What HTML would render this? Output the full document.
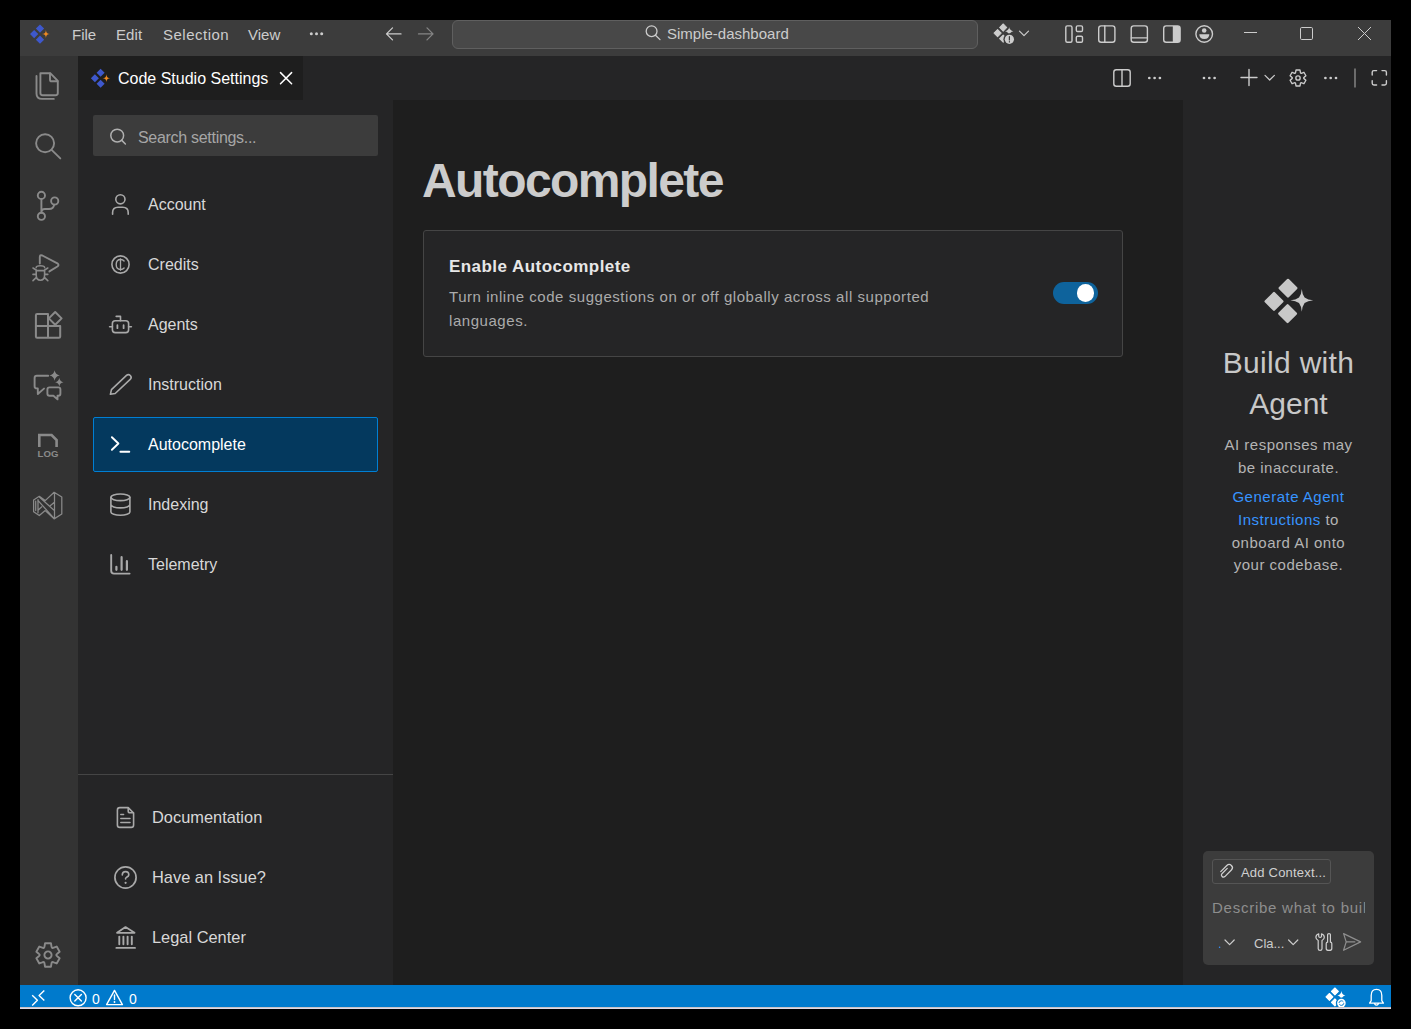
<!DOCTYPE html>
<html><head><meta charset="utf-8">
<style>
*{margin:0;padding:0;box-sizing:border-box}
html,body{width:1411px;height:1029px;background:#000;overflow:hidden;font-family:"Liberation Sans",sans-serif}
.r{position:absolute}
.t{position:absolute;white-space:nowrap}
svg.ov{position:absolute;left:0;top:0;width:1411px;height:1029px}
</style></head><body>
<div class="r" style="left:20px;top:20px;width:1371px;height:36px;background:#3c3c3c;"></div>
<div class="r" style="left:20px;top:56px;width:58px;height:929px;background:#333333;"></div>
<div class="r" style="left:78px;top:56px;width:1105px;height:44px;background:#252526;"></div>
<div class="r" style="left:78px;top:56px;width:225px;height:44px;background:#1e1e1e;"></div>
<div class="r" style="left:78px;top:100px;width:315px;height:885px;background:#252526;"></div>
<div class="r" style="left:393px;top:100px;width:790px;height:885px;background:#1e1e1e;"></div>
<div class="r" style="left:1183px;top:56px;width:208px;height:929px;background:#252526;"></div>
<div class="r" style="left:20px;top:985px;width:1371px;height:22px;background:#007acc;"></div>
<div class="r" style="left:20px;top:1007px;width:1371px;height:2px;background:#e2dee6;"></div>
<div class="r" style="left:452px;top:20px;width:526px;height:29px;background:#484848;border:1px solid #5f5f5f;border-radius:6px;"></div>
<div class="r" style="left:93px;top:115px;width:285px;height:41px;background:#3c3c3c;border-radius:2px;"></div>
<div class="r" style="left:93px;top:417px;width:285px;height:55px;background:#04395e;border:1px solid #007fd4;border-radius:2px;"></div>
<div class="r" style="left:78px;top:774px;width:315px;height:1px;background:#454545;"></div>
<div class="r" style="left:423px;top:230px;width:700px;height:127px;background:#252526;border:1px solid #454545;border-radius:3px;"></div>
<div class="r" style="left:1053px;top:282px;width:45px;height:22px;background:#0e639c;border-radius:11px;"></div>
<div class="r" style="left:1076.6px;top:284.2px;width:17.4px;height:17.4px;background:#ffffff;border-radius:50%;"></div>
<div class="r" style="left:1203px;top:851px;width:171px;height:114px;background:#3c3c3c;border-radius:5px;"></div>
<div class="r" style="left:1212px;top:859px;width:119px;height:25px;background:transparent;border:1px solid #555555;border-radius:3px;"></div>
<div class="t" style="left:72px;top:27.10px;font-size:15px;line-height:15px;color:#cccccc;font-weight:normal;letter-spacing:0px;">File</div>
<div class="t" style="left:116px;top:27.10px;font-size:15px;line-height:15px;color:#cccccc;font-weight:normal;letter-spacing:0.1px;">Edit</div>
<div class="t" style="left:163px;top:27.10px;font-size:15px;line-height:15px;color:#cccccc;font-weight:normal;letter-spacing:0.5px;">Selection</div>
<div class="t" style="left:248px;top:27.10px;font-size:15px;line-height:15px;color:#cccccc;font-weight:normal;letter-spacing:0px;">View</div>
<div class="t" style="left:667px;top:25.90px;font-size:15px;line-height:15px;color:#cccccc;font-weight:normal;">Simple-dashboard</div>
<div class="t" style="left:118px;top:70.56px;font-size:16px;line-height:16px;color:#ffffff;font-weight:normal;">Code Studio Settings</div>
<div class="t" style="left:138px;top:129.66px;font-size:16px;line-height:16px;color:#a6a6a6;font-weight:normal;letter-spacing:-0.3px;">Search settings...</div>
<div class="t" style="left:148px;top:196.96px;font-size:16px;line-height:16px;color:#d8d8d8;font-weight:normal;">Account</div>
<div class="t" style="left:148px;top:256.96px;font-size:16px;line-height:16px;color:#d8d8d8;font-weight:normal;">Credits</div>
<div class="t" style="left:148px;top:316.96px;font-size:16px;line-height:16px;color:#d8d8d8;font-weight:normal;">Agents</div>
<div class="t" style="left:148px;top:376.96px;font-size:16px;line-height:16px;color:#d8d8d8;font-weight:normal;">Instruction</div>
<div class="t" style="left:148px;top:436.96px;font-size:16px;line-height:16px;color:#ffffff;font-weight:normal;">Autocomplete</div>
<div class="t" style="left:148px;top:496.96px;font-size:16px;line-height:16px;color:#d8d8d8;font-weight:normal;">Indexing</div>
<div class="t" style="left:148px;top:556.96px;font-size:16px;line-height:16px;color:#d8d8d8;font-weight:normal;">Telemetry</div>
<div class="t" style="left:152px;top:808.92px;font-size:16.4px;line-height:16.4px;color:#d8d8d8;font-weight:normal;">Documentation</div>
<div class="t" style="left:152px;top:868.92px;font-size:16.4px;line-height:16.4px;color:#d8d8d8;font-weight:normal;">Have an Issue?</div>
<div class="t" style="left:152px;top:928.92px;font-size:16.4px;line-height:16.4px;color:#d8d8d8;font-weight:normal;">Legal Center</div>
<div class="t" style="left:422px;top:157.37px;font-size:48px;line-height:48px;color:#cccccc;font-weight:bold;letter-spacing:-1.6px;">Autocomplete</div>
<div class="t" style="left:449px;top:258.31px;font-size:17px;line-height:17px;color:#e7e7e7;font-weight:bold;letter-spacing:0.45px;">Enable Autocomplete</div>
<div class="t" style="left:449px;top:289.10px;font-size:15px;line-height:15px;color:#ababab;font-weight:normal;letter-spacing:0.55px;">Turn inline code suggestions on or off globally across all supported</div>
<div class="t" style="left:449px;top:313.10px;font-size:15px;line-height:15px;color:#ababab;font-weight:normal;letter-spacing:0.55px;">languages.</div>
<div class="t" style="left:1288.5px;top:348.31px;font-size:30px;line-height:30px;color:#c8c8c8;font-weight:normal;transform:translateX(-50%);text-align:center;letter-spacing:0.3px;">Build with</div>
<div class="t" style="left:1288.5px;top:388.71px;font-size:30px;line-height:30px;color:#c8c8c8;font-weight:normal;transform:translateX(-50%);text-align:center;letter-spacing:0px;">Agent</div>
<div class="t" style="left:1288.5px;top:437.20px;font-size:15px;line-height:15px;color:#b4b4b4;font-weight:normal;transform:translateX(-50%);text-align:center;letter-spacing:0.5px;">AI responses may</div>
<div class="t" style="left:1288.5px;top:460.00px;font-size:15px;line-height:15px;color:#b4b4b4;font-weight:normal;transform:translateX(-50%);text-align:center;letter-spacing:0.5px;">be inaccurate.</div>
<div class="t" style="left:1288.5px;top:489.30px;font-size:15px;line-height:15px;color:#b4b4b4;font-weight:normal;transform:translateX(-50%);text-align:center;letter-spacing:0.5px;"><span style="color:#3794ff">Generate Agent</span></div>
<div class="t" style="left:1288.5px;top:512.20px;font-size:15px;line-height:15px;color:#b4b4b4;font-weight:normal;transform:translateX(-50%);text-align:center;letter-spacing:0.5px;"><span style="color:#3794ff">Instructions</span> to</div>
<div class="t" style="left:1288.5px;top:534.90px;font-size:15px;line-height:15px;color:#b4b4b4;font-weight:normal;transform:translateX(-50%);text-align:center;letter-spacing:0.5px;">onboard AI onto</div>
<div class="t" style="left:1288.5px;top:556.60px;font-size:15px;line-height:15px;color:#b4b4b4;font-weight:normal;transform:translateX(-50%);text-align:center;letter-spacing:0.5px;">your codebase.</div>
<div class="t" style="left:1241px;top:866.30px;font-size:13px;line-height:13px;color:#d0d0d0;font-weight:normal;letter-spacing:0.2px;">Add Context...</div>
<div class="r" style="left:1212px;top:895px;width:153px;height:24px;overflow:hidden"><div class="t" style="left:0px;top:5.30px;font-size:15px;line-height:15px;color:#8e8e8e;font-weight:normal;letter-spacing:0.75px;">Describe what to build</div></div>
<div class="t" style="left:1254px;top:936.50px;font-size:13px;line-height:13px;color:#cccccc;font-weight:normal;">Cla...</div>
<div class="t" style="left:92px;top:991.55px;font-size:14px;line-height:14px;color:#ffffff;font-weight:normal;">0</div>
<div class="t" style="left:129px;top:991.55px;font-size:14px;line-height:14px;color:#ffffff;font-weight:normal;">0</div>

<svg class="ov" width="1411" height="1029" viewBox="0 0 1411 1029" fill="none" stroke-linecap="round" stroke-linejoin="round">
<defs>
  <linearGradient id="bl" x1="0" y1="0" x2="1" y2="1">
    <stop offset="0" stop-color="#4865dc"/><stop offset="1" stop-color="#3249b0"/>
  </linearGradient>
  <g id="dia">
    <path d="M0,-8.3 L8.3,0 L0,8.3 L-8.3,0Z" stroke-width="2.4" stroke-linejoin="round"/>
  </g>
  <path id="star" d="M0,-11.4 Q0.4,-6 2.8,-2.8 Q6,-0.4 11.4,0 Q6,0.4 2.8,2.8 Q0.4,6 0,11.4 Q-0.4,6 -2.8,2.8 Q-6,0.4 -11.4,0 Q-6,-0.4 -2.8,-2.8 Q-0.4,-6 0,-11.4Z"/>
</defs>

<!-- ===== title bar ===== -->
<!-- logo -->
<path d="M40.00,24.40 L44.12,28.52 L40.00,32.64 L35.88,28.52Z M34.15,29.98 L38.27,34.10 L34.15,38.22 L30.03,34.10Z M40.00,35.56 L44.12,39.68 L40.00,43.80 L35.88,39.68Z" fill="#3e58cc"/><path d="M45.94,30.10 Q46.08,31.99 46.92,33.12 Q48.05,33.96 49.94,34.10 Q48.05,34.24 46.92,35.08 Q46.08,36.21 45.94,38.10 Q45.80,36.21 44.96,35.08 Q43.83,34.24 41.94,34.10 Q43.83,33.96 44.96,33.12 Q45.80,31.99 45.94,30.10Z" fill="#ee8a22"/>
<!-- more dots -->
<g fill="#cccccc"><circle cx="311.3" cy="33.8" r="1.5"/><circle cx="316.5" cy="33.8" r="1.5"/><circle cx="321.7" cy="33.8" r="1.5"/></g>
<!-- back / forward -->
<g stroke="#cccccc" stroke-width="1.3"><path d="M386.5,33.9 H401 M392.5,27.9 L386.5,33.9 L392.5,39.9"/></g>
<g stroke="#858585" stroke-width="1.3"><path d="M418.5,33.9 H433 M427,27.9 L433,33.9 L427,39.9"/></g>
<!-- search icon in command center -->
<g stroke="#cccccc" stroke-width="1.3"><circle cx="651.6" cy="31.2" r="5.4"/><path d="M655.5,35.2 L660,39.6"/></g>
<!-- agent status icon -->
<g transform="translate(1003.2,33.1) scale(0.43)" fill="#cccccc" stroke="#cccccc">
  <use href="#dia" x="0" y="-13"/><use href="#dia" x="-13" y="0"/><use href="#dia" x="0" y="13"/>
</g>
<path d="M1009.2,27.2 Q1009.8,30.4 1013.4,31.2 Q1009.8,32 1009.2,35.2 Q1008.6,32 1005,31.2 Q1008.6,30.4 1009.2,27.2Z" fill="#cccccc"/>
<circle cx="1009.4" cy="39.3" r="6" fill="#3c3c3c"/>
<circle cx="1009.4" cy="39.3" r="4.6" fill="#cccccc"/>
<path d="M1009.4,36.6 V40 M1009.4,41.7 V42" stroke="#3c3c3c" stroke-width="1.2"/>
<path d="M1019.5,31.2 L1024,35.7 L1028.5,31.2" stroke="#cccccc" stroke-width="1.2"/>
<!-- layout icons -->
<g stroke="#cccccc" stroke-width="1.4" fill="none">
  <rect x="1065.8" y="25.9" width="6.2" height="16.4" rx="1.5"/>
  <rect x="1076.3" y="25.9" width="6.2" height="5.6" rx="1.3"/>
  <rect x="1076.3" y="36.3" width="6.2" height="6" rx="1.3"/>
  <rect x="1098.7" y="25.9" width="16.2" height="16.4" rx="2.5"/><path d="M1104.8,26 V42.2"/>
  <rect x="1131.2" y="25.9" width="16.2" height="16.4" rx="2.5"/><path d="M1131.3,37.9 H1147.3"/>
  <rect x="1163.7" y="25.9" width="16.4" height="16.4" rx="2.5"/>
  <circle cx="1204.2" cy="34" r="8.3"/>
</g>
<path d="M1172.8,25.9 H1177.6 A2.5,2.5 0 0 1 1180.1,28.4 V39.8 A2.5,2.5 0 0 1 1177.6,42.3 H1172.8Z" fill="#cccccc"/>
<circle cx="1204.2" cy="30.5" r="2.3" fill="#cccccc"/>
<path d="M1199.3,34.2 H1209.3 Q1209.3,39 1204.3,39 Q1199.3,39 1199.3,34.2Z" fill="#cccccc"/>
<!-- window controls -->
<g stroke="#cccccc" stroke-width="1" fill="none" stroke-linecap="butt">
  <path d="M1244,32.5 H1257"/>
  <rect x="1300.5" y="27.5" width="12" height="12" rx="1.2"/>
  <path d="M1358,27 L1371,40 M1371,27 L1358,40"/>
</g>

<!-- ===== activity bar ===== -->
<g stroke="#8a8a8a" stroke-width="1.9" fill="none">
  <!-- files -->
  <path d="M40.4,73.3 H50.5 L57.8,80.8 V93 Q57.8,95.2 55.6,95.2 H42.6 Q40.4,95.2 40.4,93 Z"/>
  <path d="M50,73.5 V79.7 Q50,81.3 51.6,81.3 H57.5"/>
  <path d="M36.5,76 V93.5 Q36.5,98.9 42,98.9 H53.8"/>
  <!-- search -->
  <circle cx="45.1" cy="143.3" r="9"/>
  <path d="M51.6,149.9 L60.3,158.4"/>
  <!-- source control -->
  <circle cx="41.4" cy="195.4" r="3.6"/>
  <circle cx="54.7" cy="201" r="3.6"/>
  <circle cx="41.4" cy="216.3" r="3.6"/>
  <path d="M41.4,199 V212.7 M54.2,204.6 Q53.5,209 49,209 H44.8 Q41.6,209 41.4,212"/>
  <!-- run & debug -->
  <path d="M39.8,263.6 V257 Q39.8,254.6 42.3,255.5 L57.4,263.3 Q59.6,265 57.4,266.5 L49.4,271.4"/>
  <path d="M36.2,267.6 Q36.2,265.8 40.4,265.8 Q44.6,265.8 44.6,267.6 M36.2,270.6 H44.6 M36.2,270.6 V275 Q36.2,280.2 40.4,280.2 Q44.6,280.2 44.6,275 V270.6 M36.2,270 L33,268 M44.6,270 L47.8,268 M36.2,274.4 H33 M44.6,274.4 H47.8 M36.4,277.4 L33,280.6 M44.4,277.4 L47.8,280.6" stroke-width="1.6"/>
  <!-- extensions -->
  <path d="M35.9,326 V315.3 Q35.9,314.1 37.1,314.1 H48 V337.8 H37.1 Q35.9,337.8 35.9,336.6 Z M35.9,326 H60.2 V336.6 Q60.2,337.8 59,337.8 H48" stroke-width="2"/>
  <path d="M55.2,312 L61.6,318.4 L55.2,324.8 L48.8,318.4 Z" stroke-width="2"/>
  <!-- chat sparkle -->
  <path d="M48.2,375.8 H36.8 Q34.6,375.8 34.6,378 V386.2 Q34.6,388.4 36.8,388.4 H37.8 V394 L44,388.6"/>
  <path d="M49.5,387.4 H58.3 Q60.4,387.4 60.4,389.5 V393.7 Q60.4,395.8 58.3,395.8 H57.5 V399.4 L53.4,395.8 H49.5 Q47.4,395.8 47.4,393.7 V389.5 Q47.4,387.4 49.5,387.4 Z"/>
  <!-- LOG -->
  <path d="M39.3,447 V435 H51.6 L56.6,440 V447" stroke-width="2.6" stroke-linejoin="miter" stroke-linecap="butt"/>
  <!-- VS -->
  <path d="M33.6,500 L39.3,496.3 L45.2,500.6 L54.1,492.3 L61.8,497 V514 L54.1,518.9 L45.2,510.6 L39.3,515.6 L33.6,511.7 Z M54.5,493 V518.4 M39.6,497.3 L54.4,510.6 M37.9,500.4 L53.4,517.6 M54.4,502.3 L50.2,505.8 M41.8,506.8 L38,510.2 M35.7,501.2 V510.6 M38,499.6 V512.8" stroke-width="1.25"/>
  <!-- gear -->
</g>
<g fill="#8a8a8a">
  <path d="M54.6,375.5 m0,-5.2 Q55.3,374.8 59.8,375.5 Q55.3,376.2 54.6,380.7 Q53.9,376.2 49.4,375.5 Q53.9,374.8 54.6,370.3Z"/>
  <path d="M59.3,382.3 m0,-4.2 Q59.9,381.7 63.5,382.3 Q59.9,382.9 59.3,386.5 Q58.7,382.9 55.1,382.3 Q58.7,381.7 59.3,378.1Z"/>
</g>
<text x="48" y="457.2" font-family="Liberation Sans" font-weight="bold" font-size="9.6" fill="#8a8a8a" text-anchor="middle" stroke="none">LOG</text>
<g transform="translate(48,955)" stroke="#8a8a8a" stroke-width="1.9" fill="none">
  <path d="M-3.48,-8.62L-2.93,-11.74 L2.93,-11.74 L3.48,-8.62 Q3.70,-6.41 5.73,-7.33L8.70,-8.41 L11.63,-3.34 L9.21,-1.29 Q7.40,0.00 9.21,1.29L11.63,3.34 L8.70,8.41 L5.73,7.33 Q3.70,6.41 3.48,8.62L2.93,11.74 L-2.93,11.74 L-3.48,8.62 Q-3.70,6.41 -5.73,7.33L-8.70,8.41 L-11.63,3.34 L-9.21,1.29 Q-7.40,0.00 -9.21,-1.29L-11.63,-3.34 L-8.70,-8.41 L-5.73,-7.33 Q-3.70,-6.41 -3.48,-8.62Z"/>
  <circle r="3.6"/>
</g>

<!-- ===== tab ===== -->
<path d="M100.60,68.72 L104.63,72.74 L100.60,76.77 L96.57,72.74Z M94.88,74.17 L98.91,78.20 L94.88,82.23 L90.85,78.20Z M100.60,79.63 L104.63,83.66 L100.60,87.68 L96.57,83.66Z" fill="#3e58cc"/><path d="M106.41,74.30 Q106.54,76.15 107.37,77.24 Q108.46,78.06 110.31,78.20 Q108.46,78.34 107.37,79.16 Q106.54,80.25 106.41,82.10 Q106.27,80.25 105.45,79.16 Q104.36,78.34 102.51,78.20 Q104.36,78.06 105.45,77.24 Q106.27,76.15 106.41,74.30Z" fill="#ee8a22"/>
<path d="M280.5,72.6 L291.6,83.7 M291.6,72.6 L280.5,83.7" stroke="#ffffff" stroke-width="1.5"/>

<!-- ===== settings search icon ===== -->
<g stroke="#b0b0b0" stroke-width="1.5"><circle cx="117.2" cy="135.6" r="6.4"/><path d="M121.8,140.4 L125.4,144"/></g>

<!-- ===== nav icons ===== -->
<g stroke="#a9a9a9" stroke-width="1.6" fill="none">
  <!-- account -->
  <circle cx="120.4" cy="199.3" r="4.6"/>
  <path d="M112.6,214.2 V212.5 Q112.6,207.2 118,207.2 H122.8 Q128.2,207.2 128.2,212.5 V214.2"/>
  <!-- credits -->
  <circle cx="120.5" cy="264.5" r="8.6"/>
  <path d="M124.1,261 Q122.8,259.5 120.6,259.5 Q116.2,259.5 116.2,264.5 Q116.2,269.5 120.6,269.5 Q122.8,269.5 124.1,268" stroke-width="1.4"/>
  <path d="M120.5,258.8 V270.2" stroke-width="1.3"/>
  <!-- agents -->
  <rect x="112.4" y="320.8" width="16.2" height="11.8" rx="2.8"/>
  <path d="M120.5,320.8 V316.4 H116.2 M109.6,326.7 H112.4 M128.6,326.7 H131.4"/>
  <path d="M117.4,325.2 V328.2 M123.6,325.2 V328.2" stroke-width="1.8"/>
  <!-- instruction (pencil) -->
  <path d="M110.40,394.30 L111.45,389.59 L126.48,375.39 A2.7,2.7 0 0 1 130.19,379.32 L115.16,393.52 Z"/>
  <!-- indexing -->
  <ellipse cx="120.4" cy="497.3" rx="9.5" ry="3.3"/>
  <path d="M110.9,497.3 V511.9 A9.5,3.3 0 0 0 129.9,511.9 V497.3 M110.9,504.6 A9.5,3.3 0 0 0 129.9,504.6"/>
  <!-- telemetry -->
  <path d="M111.2,555 V570.8 Q111.2,573.6 114,573.6 H129.6" stroke-width="1.9"/>
  <path d="M116.4,566.8 V569.8 M121.6,557.2 V569.8 M126.9,561.2 V569.8" stroke-width="2.2"/>
  <!-- documentation -->
  <path d="M128.2,807.6 H119.8 Q117.4,807.6 117.4,810 V825 Q117.4,827.4 119.8,827.4 H131.2 Q133.6,827.4 133.6,825 V813 Z"/>
  <path d="M128.2,807.8 V811 Q128.2,812.8 130,812.8 H133.4"/>
  <path d="M120.8,814.4 H123.6 M120.8,818.6 H130 M120.8,822.6 H130" stroke-width="1.5"/>
  <!-- question -->
  <circle cx="125.5" cy="877.5" r="10.6" stroke-width="1.7"/>
  <path d="M122.3,875 Q122.3,871.6 125.6,871.6 Q128.8,871.6 128.8,874.6 Q128.8,876.6 126.2,877.6 Q125.6,877.9 125.6,878.4 V879"/>
  <!-- legal -->
  <path d="M117,932.8 L125.5,927 L134.6,932.8 Z" stroke-width="1.7"/>
  <path d="M119.3,936.6 V944.2 M123.4,936.6 V944.2 M127.6,936.6 V944.2 M131.8,936.6 V944.2" stroke-width="1.9"/>
  <path d="M116.4,947.9 H135" stroke-width="1.9"/>
</g>
<circle cx="125.6" cy="882.8" r="1.1" fill="#a9a9a9"/>
<!-- autocomplete terminal -->
<path d="M111.9,437.2 L118.4,443.5 L111.9,449.8 M120.4,451.8 H129.3" stroke="#ffffff" stroke-width="1.9"/>

<!-- ===== editor actions ===== -->
<g stroke="#cccccc" stroke-width="1.4" fill="none">
  <rect x="1113.8" y="69.8" width="16.4" height="16.4" rx="2.5"/><path d="M1122,70 V86"/>
  <path d="M1249,69.5 V85.5 M1241,77.5 H1257"/>
  <path d="M1265,75.3 L1269.7,80 L1274.4,75.3" stroke-width="1.2"/>
  <path d="M1372.2,75 V72.3 Q1372.2,70.6 1373.9,70.6 H1376.6 M1382,70.6 H1384.7 Q1386.4,70.6 1386.4,72.3 V75 M1386.4,80.6 V83.3 Q1386.4,85 1384.7,85 H1382 M1376.6,85 H1373.9 Q1372.2,85 1372.2,83.3 V80.6"/>
</g>
<g fill="#cccccc">
  <circle cx="1149.3" cy="78" r="1.35"/><circle cx="1154.6" cy="78" r="1.35"/><circle cx="1159.9" cy="78" r="1.35"/>
  <circle cx="1204" cy="78" r="1.35"/><circle cx="1209.3" cy="78" r="1.35"/><circle cx="1214.6" cy="78" r="1.35"/>
  <circle cx="1325.4" cy="78" r="1.35"/><circle cx="1330.7" cy="78" r="1.35"/><circle cx="1336" cy="78" r="1.35"/>
</g>
<path d="M1355,68.6 V87.4" stroke="#8a8a8a" stroke-width="1.4" stroke-linecap="butt"/>
<g transform="translate(1298,78) scale(0.68)" stroke="#cccccc" stroke-width="2" fill="none">
  <path d="M-3.48,-8.62L-2.93,-11.74 L2.93,-11.74 L3.48,-8.62 Q3.70,-6.41 5.73,-7.33L8.70,-8.41 L11.63,-3.34 L9.21,-1.29 Q7.40,0.00 9.21,1.29L11.63,3.34 L8.70,8.41 L5.73,7.33 Q3.70,6.41 3.48,8.62L2.93,11.74 L-2.93,11.74 L-3.48,8.62 Q-3.70,6.41 -5.73,7.33L-8.70,8.41 L-11.63,3.34 L-9.21,1.29 Q-7.40,0.00 -9.21,-1.29L-11.63,-3.34 L-8.70,-8.41 L-5.73,-7.33 Q-3.70,-6.41 -3.48,-8.62Z"/><circle r="3.2"/>
</g>

<!-- ===== big agent icon ===== -->
<g transform="translate(1288,301)" fill="#c8c8c8" stroke="#c8c8c8">
  <use href="#dia" x="0" y="-12.8"/><use href="#dia" x="-14" y="0.4"/><use href="#dia" x="-0.4" y="12.6"/>
  <use href="#star" x="13.8" y="-0.7" stroke="none"/>
</g>

<!-- ===== chat input ===== -->
<path transform="translate(1226,870.9) rotate(-45) scale(0.88)" d="M-4.8,-3.65 L5,-3.65 A3.65,3.65 0 0 1 5,3.65 L-5.5,3.65 A2.33,2.33 0 0 1 -5.5,-1 L3,-1" stroke="#d0d0d0" stroke-width="1.45" fill="none"/>
<circle cx="1219.6" cy="947.2" r="0.8" fill="#3794ff"/>
<g stroke="#cccccc" stroke-width="1.2" fill="none">
  <path d="M1225,940 L1229.6,944.6 L1234.2,940"/>
  <path d="M1288.6,940 L1293.2,944.6 L1297.8,940"/>
</g>
<g stroke="#d0d0d0" stroke-width="1.2" fill="none">
  <path d="M1318.7,933.8 V936.2 Q1318.7,937.3 1320.1,937.3 Q1321.5,937.3 1321.5,936.2 V933.8 Q1324.3,934.8 1324.3,937.3 Q1324.3,939.5 1322,940.5 V948.8 Q1322,950.4 1320.1,950.4 Q1318.2,950.4 1318.2,948.8 V940.5 Q1315.9,939.5 1315.9,937.3 Q1315.9,934.8 1318.7,933.8Z"/>
  <path d="M1327.6,934.6 Q1327.6,933.6 1329,933.6 Q1330.4,933.6 1330.4,934.6 V942.2 Q1331.8,942.2 1331.8,943.6 V948.4 Q1331.8,950.4 1329,950.4 Q1326.2,950.4 1326.2,948.4 V943.6 Q1326.2,942.2 1327.6,942.2 Z"/>
</g>
<path d="M1343.6,933.6 L1360.6,941.9 L1343.6,950.3 L1346.2,941.9 Z" stroke="#8e8e8e" stroke-width="1.2" fill="none"/>
<path d="M1346.4,941.9 H1354.8" stroke="#8e8e8e" stroke-width="1.3"/>

<!-- ===== status bar ===== -->
<g stroke="#ffffff" stroke-width="1.4" fill="none">
  <path d="M32.2,995.2 L37.4,1000.3 L32.2,1005.4 M44.3,990.6 L39.1,995.6 L44.3,1000.6" stroke-linecap="butt"/>
  <circle cx="78.1" cy="997.8" r="8"/>
  <path d="M74.8,994.5 L81.4,1001.1 M81.4,994.5 L74.8,1001.1"/>
  <path d="M114.5,990.4 L122.4,1004.6 H106.6 Z" stroke-linejoin="round"/>
  <path d="M114.5,995 V999.6"/>
</g>
<circle cx="114.5" cy="1002" r="0.9" fill="#ffffff"/>
<g transform="translate(1334.9,996.9) scale(0.42)" fill="#ffffff" stroke="#ffffff">
  <use href="#dia" x="0" y="-13"/><use href="#dia" x="-13" y="0"/><use href="#dia" x="0" y="13"/>
</g>
<path d="M1341.4,991 Q1341.9,994.6 1345.4,995.5 Q1341.9,996.4 1341.4,1000 Q1340.9,996.4 1337.4,995.5 Q1340.9,994.6 1341.4,991Z" fill="#ffffff"/>
<circle cx="1341.4" cy="1003.1" r="5.6" fill="#007acc"/>
<circle cx="1341.4" cy="1003.1" r="4.3" fill="#ffffff"/>
<path d="M1339,1002.6 Q1339.4,1000.8 1341.4,1000.8 Q1342.6,1000.8 1343.2,1001.6 M1343.8,1003.6 Q1343.4,1005.4 1341.4,1005.4 Q1340.2,1005.4 1339.6,1004.6" stroke="#007acc" stroke-width="1" fill="none"/>
<path d="M1369.6,1003.2 H1383.4 L1381.8,1000.6 V995.4 Q1381.8,989.4 1376.5,989.4 Q1371.2,989.4 1371.2,995.4 V1000.6 Z M1374.6,1003.8 Q1376.5,1006.4 1378.4,1003.8" stroke="#ffffff" stroke-width="1.3" fill="none"/>
<rect x="20" y="1007" width="1371" height="1" fill="#c9c2c6"/><rect x="20" y="1008" width="1371" height="1" fill="#dedbe8"/>

</svg>
</body></html>
